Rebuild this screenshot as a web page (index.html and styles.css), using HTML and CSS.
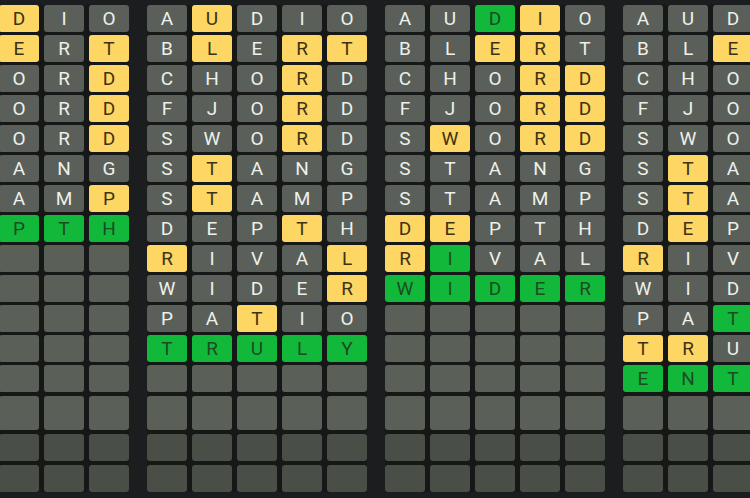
FILE: index.html
```html
<!DOCTYPE html>
<html lang="en">
<head>
    <meta charset="UTF-8">
    <meta name="viewport" content="width=device-width, initial-scale=1.0">
    <title>Quad Words</title>
    <link rel="stylesheet" href="styles.css">
</head>
<body>
<div class="boards">

    <!-- board 1 : DEPTH -->
    <div class="board">
        <div class="row"><span class="tile miss">A</span><span class="tile miss">U</span><span class="tile near">D</span><span class="tile miss">I</span><span class="tile miss">O</span></div>
        <div class="row"><span class="tile miss">B</span><span class="tile miss">L</span><span class="tile near">E</span><span class="tile miss">R</span><span class="tile near">T</span></div>
        <div class="row"><span class="tile miss">C</span><span class="tile miss">H</span><span class="tile miss">O</span><span class="tile miss">R</span><span class="tile near">D</span></div>
        <div class="row"><span class="tile miss">F</span><span class="tile miss">J</span><span class="tile miss">O</span><span class="tile miss">R</span><span class="tile near">D</span></div>
        <div class="row"><span class="tile miss">S</span><span class="tile miss">W</span><span class="tile miss">O</span><span class="tile miss">R</span><span class="tile near">D</span></div>
        <div class="row"><span class="tile miss">S</span><span class="tile near">T</span><span class="tile miss">A</span><span class="tile miss">N</span><span class="tile miss">G</span></div>
        <div class="row"><span class="tile miss">S</span><span class="tile near">T</span><span class="tile miss">A</span><span class="tile miss">M</span><span class="tile near">P</span></div>
        <div class="row"><span class="tile hit">D</span><span class="tile hit">E</span><span class="tile hit">P</span><span class="tile hit">T</span><span class="tile hit">H</span></div>
        <div class="row"><span class="tile"></span><span class="tile"></span><span class="tile"></span><span class="tile"></span><span class="tile"></span></div>
        <div class="row"><span class="tile"></span><span class="tile"></span><span class="tile"></span><span class="tile"></span><span class="tile"></span></div>
        <div class="row"><span class="tile"></span><span class="tile"></span><span class="tile"></span><span class="tile"></span><span class="tile"></span></div>
        <div class="row"><span class="tile"></span><span class="tile"></span><span class="tile"></span><span class="tile"></span><span class="tile"></span></div>
        <div class="row"><span class="tile"></span><span class="tile"></span><span class="tile"></span><span class="tile"></span><span class="tile"></span></div>
        <div class="row tall"><span class="tile"></span><span class="tile"></span><span class="tile"></span><span class="tile"></span><span class="tile"></span></div>
        <div class="row dim"><span class="tile"></span><span class="tile"></span><span class="tile"></span><span class="tile"></span><span class="tile"></span></div>
        <div class="row dim"><span class="tile"></span><span class="tile"></span><span class="tile"></span><span class="tile"></span><span class="tile"></span></div>
    </div>

    <!-- board 2 : TRULY -->
    <div class="board">
        <div class="row"><span class="tile miss">A</span><span class="tile near">U</span><span class="tile miss">D</span><span class="tile miss">I</span><span class="tile miss">O</span></div>
        <div class="row"><span class="tile miss">B</span><span class="tile near">L</span><span class="tile miss">E</span><span class="tile near">R</span><span class="tile near">T</span></div>
        <div class="row"><span class="tile miss">C</span><span class="tile miss">H</span><span class="tile miss">O</span><span class="tile near">R</span><span class="tile miss">D</span></div>
        <div class="row"><span class="tile miss">F</span><span class="tile miss">J</span><span class="tile miss">O</span><span class="tile near">R</span><span class="tile miss">D</span></div>
        <div class="row"><span class="tile miss">S</span><span class="tile miss">W</span><span class="tile miss">O</span><span class="tile near">R</span><span class="tile miss">D</span></div>
        <div class="row"><span class="tile miss">S</span><span class="tile near">T</span><span class="tile miss">A</span><span class="tile miss">N</span><span class="tile miss">G</span></div>
        <div class="row"><span class="tile miss">S</span><span class="tile near">T</span><span class="tile miss">A</span><span class="tile miss">M</span><span class="tile miss">P</span></div>
        <div class="row"><span class="tile miss">D</span><span class="tile miss">E</span><span class="tile miss">P</span><span class="tile near">T</span><span class="tile miss">H</span></div>
        <div class="row"><span class="tile near">R</span><span class="tile miss">I</span><span class="tile miss">V</span><span class="tile miss">A</span><span class="tile near">L</span></div>
        <div class="row"><span class="tile miss">W</span><span class="tile miss">I</span><span class="tile miss">D</span><span class="tile miss">E</span><span class="tile near">R</span></div>
        <div class="row"><span class="tile miss">P</span><span class="tile miss">A</span><span class="tile near">T</span><span class="tile miss">I</span><span class="tile miss">O</span></div>
        <div class="row"><span class="tile hit">T</span><span class="tile hit">R</span><span class="tile hit">U</span><span class="tile hit">L</span><span class="tile hit">Y</span></div>
        <div class="row"><span class="tile"></span><span class="tile"></span><span class="tile"></span><span class="tile"></span><span class="tile"></span></div>
        <div class="row tall"><span class="tile"></span><span class="tile"></span><span class="tile"></span><span class="tile"></span><span class="tile"></span></div>
        <div class="row dim"><span class="tile"></span><span class="tile"></span><span class="tile"></span><span class="tile"></span><span class="tile"></span></div>
        <div class="row dim"><span class="tile"></span><span class="tile"></span><span class="tile"></span><span class="tile"></span><span class="tile"></span></div>
    </div>

    <!-- board 3 : WIDER -->
    <div class="board">
        <div class="row"><span class="tile miss">A</span><span class="tile miss">U</span><span class="tile hit">D</span><span class="tile near">I</span><span class="tile miss">O</span></div>
        <div class="row"><span class="tile miss">B</span><span class="tile miss">L</span><span class="tile near">E</span><span class="tile near">R</span><span class="tile miss">T</span></div>
        <div class="row"><span class="tile miss">C</span><span class="tile miss">H</span><span class="tile miss">O</span><span class="tile near">R</span><span class="tile near">D</span></div>
        <div class="row"><span class="tile miss">F</span><span class="tile miss">J</span><span class="tile miss">O</span><span class="tile near">R</span><span class="tile near">D</span></div>
        <div class="row"><span class="tile miss">S</span><span class="tile near">W</span><span class="tile miss">O</span><span class="tile near">R</span><span class="tile near">D</span></div>
        <div class="row"><span class="tile miss">S</span><span class="tile miss">T</span><span class="tile miss">A</span><span class="tile miss">N</span><span class="tile miss">G</span></div>
        <div class="row"><span class="tile miss">S</span><span class="tile miss">T</span><span class="tile miss">A</span><span class="tile miss">M</span><span class="tile miss">P</span></div>
        <div class="row"><span class="tile near">D</span><span class="tile near">E</span><span class="tile miss">P</span><span class="tile miss">T</span><span class="tile miss">H</span></div>
        <div class="row"><span class="tile near">R</span><span class="tile hit">I</span><span class="tile miss">V</span><span class="tile miss">A</span><span class="tile miss">L</span></div>
        <div class="row"><span class="tile hit">W</span><span class="tile hit">I</span><span class="tile hit">D</span><span class="tile hit">E</span><span class="tile hit">R</span></div>
        <div class="row"><span class="tile"></span><span class="tile"></span><span class="tile"></span><span class="tile"></span><span class="tile"></span></div>
        <div class="row"><span class="tile"></span><span class="tile"></span><span class="tile"></span><span class="tile"></span><span class="tile"></span></div>
        <div class="row"><span class="tile"></span><span class="tile"></span><span class="tile"></span><span class="tile"></span><span class="tile"></span></div>
        <div class="row tall"><span class="tile"></span><span class="tile"></span><span class="tile"></span><span class="tile"></span><span class="tile"></span></div>
        <div class="row dim"><span class="tile"></span><span class="tile"></span><span class="tile"></span><span class="tile"></span><span class="tile"></span></div>
        <div class="row dim"><span class="tile"></span><span class="tile"></span><span class="tile"></span><span class="tile"></span><span class="tile"></span></div>
    </div>

    <!-- board 4 : ENTRY -->
    <div class="board">
        <div class="row"><span class="tile miss">A</span><span class="tile miss">U</span><span class="tile miss">D</span><span class="tile miss">I</span><span class="tile miss">O</span></div>
        <div class="row"><span class="tile miss">B</span><span class="tile miss">L</span><span class="tile near">E</span><span class="tile hit">R</span><span class="tile near">T</span></div>
        <div class="row"><span class="tile miss">C</span><span class="tile miss">H</span><span class="tile miss">O</span><span class="tile hit">R</span><span class="tile miss">D</span></div>
        <div class="row"><span class="tile miss">F</span><span class="tile miss">J</span><span class="tile miss">O</span><span class="tile hit">R</span><span class="tile miss">D</span></div>
        <div class="row"><span class="tile miss">S</span><span class="tile miss">W</span><span class="tile miss">O</span><span class="tile hit">R</span><span class="tile miss">D</span></div>
        <div class="row"><span class="tile miss">S</span><span class="tile near">T</span><span class="tile miss">A</span><span class="tile near">N</span><span class="tile miss">G</span></div>
        <div class="row"><span class="tile miss">S</span><span class="tile near">T</span><span class="tile miss">A</span><span class="tile miss">M</span><span class="tile miss">P</span></div>
        <div class="row"><span class="tile miss">D</span><span class="tile near">E</span><span class="tile miss">P</span><span class="tile near">T</span><span class="tile miss">H</span></div>
        <div class="row"><span class="tile near">R</span><span class="tile miss">I</span><span class="tile miss">V</span><span class="tile miss">A</span><span class="tile miss">L</span></div>
        <div class="row"><span class="tile miss">W</span><span class="tile miss">I</span><span class="tile miss">D</span><span class="tile near">E</span><span class="tile near">R</span></div>
        <div class="row"><span class="tile miss">P</span><span class="tile miss">A</span><span class="tile hit">T</span><span class="tile miss">I</span><span class="tile miss">O</span></div>
        <div class="row"><span class="tile near">T</span><span class="tile near">R</span><span class="tile miss">U</span><span class="tile miss">L</span><span class="tile hit">Y</span></div>
        <div class="row"><span class="tile hit">E</span><span class="tile hit">N</span><span class="tile hit">T</span><span class="tile hit">R</span><span class="tile hit">Y</span></div>
        <div class="row tall"><span class="tile"></span><span class="tile"></span><span class="tile"></span><span class="tile"></span><span class="tile"></span></div>
        <div class="row dim"><span class="tile"></span><span class="tile"></span><span class="tile"></span><span class="tile"></span><span class="tile"></span></div>
        <div class="row dim"><span class="tile"></span><span class="tile"></span><span class="tile"></span><span class="tile"></span><span class="tile"></span></div>
    </div>

</div>
</body>
</html>
```

FILE: styles.css
```css
body {
    margin: 0;
    background: #1c1d1e;
    font-family: Roboto, "Noto Sans", sans-serif;
    overflow: hidden;
}
.boards {
    display: flex;
    gap: 18px;
    margin-left: -91px;
    padding-top: 5px;
}
.board {
    flex: none;
    display: flex;
    flex-direction: column;
    gap: 3px;
    background: #151817;
}
.row {
    display: flex;
    gap: 5px;
}
.row.tall, .row.dim { margin-top: 1px; }
.tile {
    width: 40px;
    height: 27px;
    border-radius: 3px;
    background: #5a6058;
    color: #eef0ea;
    font-size: 19px;
    display: flex;
    align-items: center;
    justify-content: center;
}
.row.tall .tile { height: 34px; }
.row.dim .tile { background: #494f46; }
.miss { background: #5a5f59; }
.near { background: #fdd663; color: #3d3314; }
.hit { background: #12b83a; color: #1b4d23; }
```
